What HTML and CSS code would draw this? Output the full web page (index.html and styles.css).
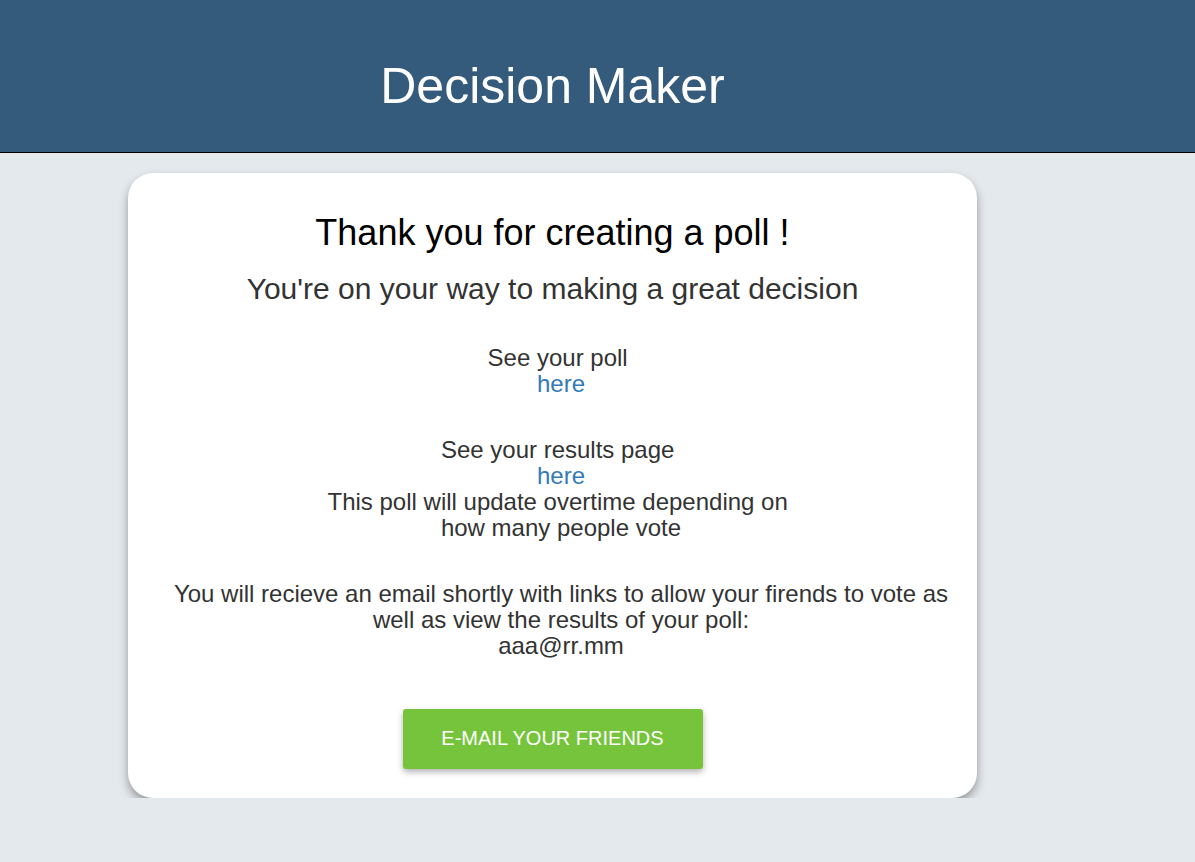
FILE: index.html
```html
<!DOCTYPE html>
<html lang="en">
<head>
<meta charset="utf-8">
<title>Decision Maker</title>
<link rel="stylesheet" href="styles.css">
</head>
<body>
<header class="site-header">
  <div class="wrap">
    <h1 class="site-title">Decision Maker</h1>
  </div>
</header>
<main class="wrap">
  <section class="card">
    <h1 class="card-title">Thank you for creating a poll !</h1>
    <h2 class="card-subtitle">You're on your way to making a great decision</h2>
    <h3 class="info info-poll">See your poll&nbsp;<br><a href="#">here</a></h3>
    <h3 class="info info-results">See your results page&nbsp;<br><a href="#">here</a><br>This poll will update overtime depending on&nbsp;<br>how many people vote</h3>
    <h3 class="info info-email">You will recieve an email shortly with links to allow your firends to vote as well as view the results of your poll:<br>aaa@rr.mm</h3>
    <button class="btn-email" type="button">E-mail your friends</button>
  </section>
</main>
</body>
</html>
```

FILE: styles.css
```css
html, body {
  margin: 0;
  padding: 0;
}

body {
  background: #e4e9ed;
  font-family: "Liberation Sans", Arial, sans-serif;
  color: #333;
}

.wrap {
  width: 849px;
  margin-left: 128px;
}

.site-header {
  background: #345b7b;
  border-bottom: 1px solid #000;
  padding: 59px 0 38px;
}

.site-title {
  margin: 0;
  text-align: center;
  color: #fff;
  font-size: 50px;
  font-weight: normal;
  line-height: 55px;
}

.card {
  margin-top: 20px;
  background: #fff;
  border-radius: 25px;
  box-shadow: 0 5px 10px rgba(0, 0, 0, 0.35);
  padding: 40px 20px 29px;
  display: flex;
  flex-direction: column;
  align-items: center;
  text-align: center;
}

.card-title {
  margin: 0;
  font-size: 36px;
  line-height: 39.6px;
  font-weight: normal;
  color: #000;
}

.card-subtitle {
  margin: 19px 0 0;
  font-size: 30px;
  line-height: 33px;
  font-weight: normal;
  color: #333;
}

.info {
  margin: 40px 0 0;
  padding-left: 17px;
  font-size: 24px;
  line-height: 26px;
  font-weight: normal;
  color: #333;
}

.info-poll {
  margin-top: 40.5px;
}

.info a {
  color: #337ab7;
  text-decoration: none;
}

.btn-email {
  margin-top: 49.5px;
  width: 300px;
  height: 60px;
  border: none;
  border-radius: 3px;
  background: #76c43b;
  color: #fff;
  font-family: "Liberation Sans", Arial, sans-serif;
  font-size: 20px;
  text-transform: uppercase;
  box-shadow: 0 3px 6px rgba(0, 0, 0, 0.3);
  cursor: pointer;
}
```
